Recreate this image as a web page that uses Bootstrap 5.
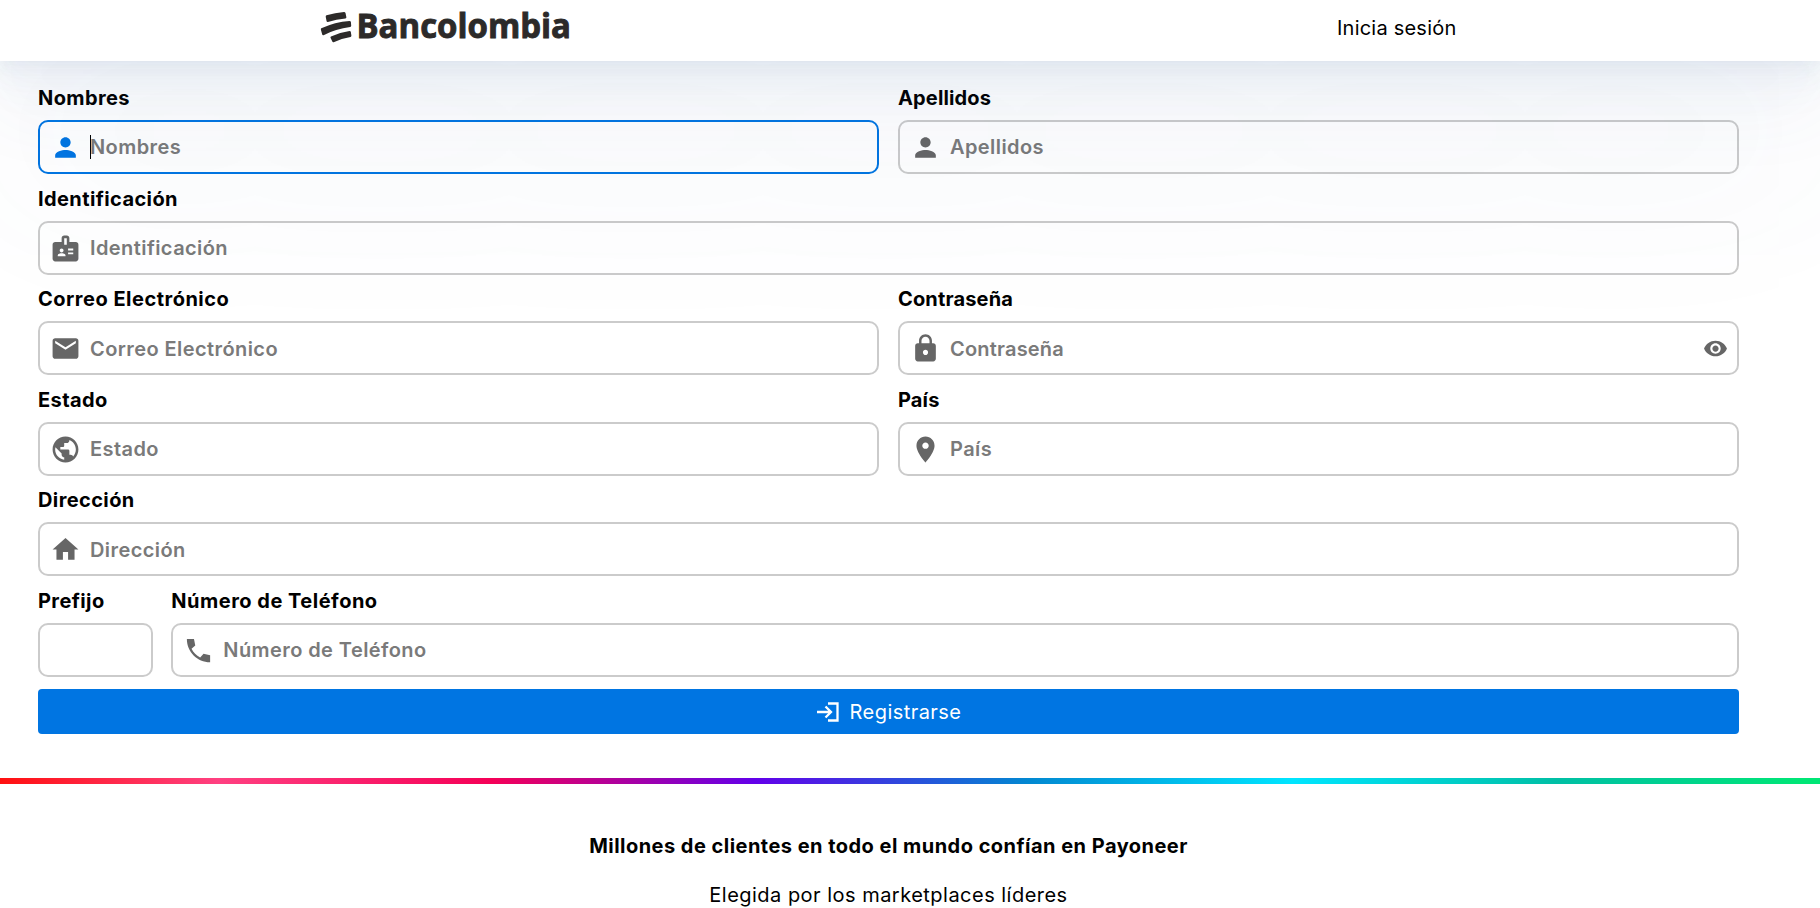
<!DOCTYPE html>
<html lang="es">
<head>
<meta charset="utf-8">
<meta name="viewport" content="width=device-width, initial-scale=1">
<title>Registro</title>
<link href="https://cdn.jsdelivr.net/npm/bootstrap@5.3.0/dist/css/bootstrap.min.css" rel="stylesheet">
<style>
body{font-family:Inter,"Liberation Sans",sans-serif;font-size:20px;color:#000;background:#fff;overflow:hidden;line-height:30px}
.top-bar{height:61px;background:#fff;z-index:5;padding-left:320px;padding-right:364px;
 box-shadow:0 100px 193px 6px rgba(80,106,158,.085),0 41.8px 80.6px 6px rgba(80,106,158,.055),0 22.3px 43.1px 4px rgba(80,106,158,.042),0 12.5px 24.2px 4px rgba(80,106,158,.035),0 6.65px 12.9px 2px rgba(80,106,158,.028),0 2.8px 5.3px rgba(80,106,158,.02)}
.brand-logo{overflow:visible}
.login-link{color:#000;width:119px;white-space:nowrap;margin-top:-5px;letter-spacing:.22px}
.page-body{width:1701px;margin-left:38px;padding-top:12.4px}
.pair{column-gap:19px}
.field-label{display:block;height:46.6px;padding-top:9.7px;font-weight:700;white-space:nowrap;letter-spacing:.4px}
.field-label.snug{letter-spacing:.15px}
.field-label.airy{letter-spacing:.5px}
.field-box{height:54px;border:2px solid #cbcbcb;border-radius:10px;padding-left:10px;padding-right:9px}
.field-box svg{width:31px;height:31px;fill:#666;flex:none;margin-top:1px}
.field-box .eye{width:25px;height:25px;margin-top:0}
.field-box input{border:0;outline:0;background:transparent;padding:1px 0 0;margin-left:9px;font-weight:600;color:#000;width:100%;min-width:0;letter-spacing:.42px}
.field-box input[type=password]{letter-spacing:.2px}
.field-box input::placeholder{color:#7a7a7a;opacity:1}
.field-box.active{border-color:#0075e2}
.field-box.active svg{fill:#0075e2}
.caret{width:1px;height:24px;background:#000;margin-left:9px;margin-right:-1px;flex:none}
.field-box.active input{margin-left:0}
.prefix-col{width:115px;flex:none}
.phone-row{column-gap:18.3px}
.submit-btn{height:45px;margin-top:12px;background:#0075e2;border:0;border-radius:4px;color:#fff;font-size:20px;padding:1px 0 0;letter-spacing:.45px}
.submit-btn svg{width:24px;height:24px;fill:none;stroke:#fff;stroke-width:2.3;margin-right:10px}
.rainbow{height:6px;margin-top:44px;background:linear-gradient(90deg,#ff1010 0,#ff4081 12%,#f50057 27%,#6200ea 41.500%,#0288d1 56.500%,#00e5ff 71%,#00bfa5 85.500%,#00e676 99%)}
.promo{width:1777px;padding-top:47px}
.promo-title{font-weight:700;font-size:20px;line-height:30px;margin:0 0 19px;letter-spacing:.47px}
.promo-sub{letter-spacing:.48px}
</style>
<script src="https://cdn.jsdelivr.net/npm/bootstrap@5.3.0/dist/js/bootstrap.bundle.min.js"></script>
</head>
<body>
<header class="top-bar position-relative d-flex justify-content-between align-items-center">
<svg class="brand-logo" width="260" height="61" viewBox="320 0 260 61" role="img" aria-label="Bancolombia" fill="#2c2a29">
<path d="M326.500 15.200Q335 12.700 344 12q1.200 0 1.500 1l.9 4.200q0 1.100-1 1.300-9 .8-17.500 3.500-1 .2-1.300-.8l-.9-4.500q0-1.200.8-1.500zM321.300 28.300Q335 22 349.500 21q1.200 0 1.400 1l.3 3.800q0 1-1 1.200-14.500 1.800-26.700 8.200-1 .3-1.300-.7l-1.300-4.800q-.2-1 .4-1.400zM331 36.500q9-4.200 18.500-5.500 1 0 1.300.8l.6 3.700q0 1.100-.9 1.400-9 1.300-16.800 5.300-1 .3-1.400-.7l-1.800-3.700q-.2-1 .5-1.300z"/>
<text x="356.500" y="37.500" font-family="'Open Sans','Noto Sans',sans-serif" font-weight="700" font-size="33.500" stroke="#2c2a29" stroke-width=".9" textLength="214.500" lengthAdjust="spacingAndGlyphs">Bancolombia</text>
</svg>
<a class="login-link text-decoration-none" href="#">Inicia sesión</a>
</header>
<main class="page-body">
<form>
<div class="d-flex pair">
<div class="flex-fill w-50"><label class="field-label">Nombres</label>
<div class="field-box active d-flex align-items-center"><svg viewBox="0 0 24 24"><path d="M12 12c2.210 0 4-1.790 4-4s-1.790-4-4-4-4 1.790-4 4 1.790 4 4 4m0 2c-2.670 0-8 1.340-8 4v2h16v-2c0-2.660-5.330-4-8-4"/></svg><span class="caret"></span><input type="text" placeholder="Nombres"></div></div>
<div class="flex-fill w-50"><label class="field-label snug">Apellidos</label>
<div class="field-box d-flex align-items-center"><svg viewBox="0 0 24 24"><path d="M12 12c2.210 0 4-1.790 4-4s-1.790-4-4-4-4 1.790-4 4 1.790 4 4 4m0 2c-2.670 0-8 1.340-8 4v2h16v-2c0-2.660-5.330-4-8-4"/></svg><input type="text" placeholder="Apellidos"></div></div>
</div>
<label class="field-label">Identificación</label>
<div class="field-box d-flex align-items-center"><svg viewBox="0 0 24 24"><path d="M20 7h-5V4c0-1.100-.9-2-2-2h-2c-1.100 0-2 .9-2 2v3H4c-1.100 0-2 .9-2 2v11c0 1.100.9 2 2 2h16c1.100 0 2-.9 2-2V9c0-1.100-.9-2-2-2M9 12c.83 0 1.500.67 1.500 1.500S9.830 15 9 15s-1.500-.67-1.500-1.500S8.170 12 9 12m3 6H6v-.75c0-1 2-1.500 3-1.500s3 .5 3 1.500zm1-9h-2V4h2zm5 7.500h-4V15h4zm0-3h-4V12h4z"/></svg><input type="text" placeholder="Identificación"></div>
<div class="d-flex pair">
<div class="flex-fill w-50"><label class="field-label airy">Correo Electrónico</label>
<div class="field-box d-flex align-items-center"><svg viewBox="0 0 24 24"><path d="M20 4H4c-1.100 0-1.990.9-1.990 2L2 18c0 1.100.9 2 2 2h16c1.100 0 2-.9 2-2V6c0-1.100-.9-2-2-2m0 4-8 5-8-5V6l8 5 8-5z"/></svg><input type="text" placeholder="Correo Electrónico"></div></div>
<div class="flex-fill w-50"><label class="field-label snug">Contraseña</label>
<div class="field-box d-flex align-items-center"><svg viewBox="0 0 24 24"><path d="M18 8h-1V6c0-2.760-2.240-5-5-5S7 3.240 7 6v2H6c-1.100 0-2 .9-2 2v10c0 1.100.9 2 2 2h12c1.100 0 2-.9 2-2V10c0-1.100-.9-2-2-2m-6 9c-1.100 0-2-.9-2-2s.9-2 2-2 2 .9 2 2-.9 2-2 2m3.100-9H8.900V6c0-1.710 1.390-3.100 3.100-3.100s3.100 1.390 3.100 3.100z"/></svg><input type="password" placeholder="Contraseña"><svg class="eye" viewBox="0 0 24 24"><path d="M12 4.500C7 4.500 2.730 7.610 1 12c1.730 4.390 6 7.500 11 7.500s9.270-3.110 11-7.500c-1.730-4.390-6-7.500-11-7.500M12 17c-2.760 0-5-2.240-5-5s2.240-5 5-5 5 2.240 5 5-2.240 5-5 5m0-8c-1.660 0-3 1.340-3 3s1.340 3 3 3 3-1.340 3-3-1.340-3-3-3"/></svg></div></div>
</div>
<div class="d-flex pair">
<div class="flex-fill w-50"><label class="field-label">Estado</label>
<div class="field-box d-flex align-items-center"><svg viewBox="0 0 24 24"><path d="M12 2C6.480 2 2 6.480 2 12s4.480 10 10 10 10-4.480 10-10S17.520 2 12 2m-1 17.930c-3.950-.49-7-3.850-7-7.930 0-.62.080-1.210.21-1.790L9 15v1c0 1.100.9 2 2 2zm6.900-2.540c-.26-.81-1-1.390-1.900-1.390h-1v-3c0-.55-.45-1-1-1H8v-2h2c.55 0 1-.45 1-1V7h2c1.100 0 2-.9 2-2v-.41c2.930 1.190 5 4.060 5 7.410 0 2.080-.8 3.970-2.100 5.390"/></svg><input type="text" placeholder="Estado"></div></div>
<div class="flex-fill w-50"><label class="field-label snug">País</label>
<div class="field-box d-flex align-items-center"><svg viewBox="0 0 24 24"><path d="M12 2C8.130 2 5 5.130 5 9c0 5.250 7 13 7 13s7-7.750 7-13c0-3.870-3.130-7-7-7m0 9.500c-1.380 0-2.500-1.120-2.500-2.500s1.120-2.500 2.500-2.500 2.500 1.120 2.500 2.500-1.120 2.500-2.500 2.500"/></svg><input type="text" placeholder="País"></div></div>
</div>
<label class="field-label">Dirección</label>
<div class="field-box d-flex align-items-center"><svg viewBox="0 0 24 24"><path d="M10 20v-6h4v6h5v-8h3L12 3 2 12h3v8z"/></svg><input type="text" placeholder="Dirección"></div>
<div class="d-flex phone-row">
<div class="prefix-col"><label class="field-label">Prefijo</label><div class="field-box"></div></div>
<div class="flex-fill"><label class="field-label airy">Número de Teléfono</label>
<div class="field-box d-flex align-items-center"><svg viewBox="0 0 24 24"><path d="M3 3h5.500l1 5.200-2.900 2.500c1.500 2.900 3.700 5.200 6.700 6.700l2.600-2.800 5.100 1V21C11 21 3 13 3 3z"/></svg><input type="text" placeholder="Número de Teléfono"></div></div>
</div>
<button type="button" class="btn submit-btn w-100 d-flex align-items-center justify-content-center"><svg viewBox="0 0 24 24"><path d="M12 3.500h9.500v17H12M1 12h14.500M9.500 6.500 15 12l-5.500 5.500"/></svg><span>Registrarse</span></button>
</form>
</main>
<div class="rainbow"></div>
<section class="promo text-center">
<h2 class="promo-title">Millones de clientes en todo el mundo confían en Payoneer</h2>
<p class="promo-sub m-0">Elegida por los marketplaces líderes</p>
</section>
</body>
</html>
